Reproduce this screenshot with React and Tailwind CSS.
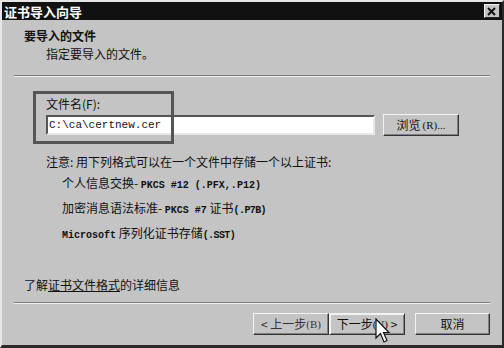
import React from "react";

const F = { fontFamily: '"Noto Sans CJK SC", "Noto Sans", sans-serif' };
const MONO = { fontFamily: '"Liberation Mono", "DejaVu Sans Mono", monospace' };

function Btn({ children, className = "" }) {
  return (
    <div
      className={
        "h-[22px] flex items-center justify-center text-[12px] text-[#111] bg-[#c4c4c4] border border-t-[#f2f2f2] border-l-[#f2f2f2] border-r-[#333] border-b-[#333] shadow-[inset_-1px_-1px_0_#808080] " +
        className
      }
    >
      {children}
    </div>
  );
}

export default function App() {
  return (
    <div className="w-[504px] h-[348px] relative overflow-hidden" style={F}>
      <div className="w-full h-full flex flex-col bg-[#c4c4c4] border-t-2 border-l-2 border-t-[#e6e6e6] border-l-[#e6e6e6] border-r-2 border-r-[#2a2a2a] border-b-[3px] border-b-[#2a2a2a]">
        {/* Title bar */}
        <div className="h-[18px] bg-[#111] flex items-center justify-between pl-[2px] pr-[2px]">
          <span className="text-white font-bold text-[13px] leading-none">证书导入向导</span>
          <div className="w-[16px] h-[14px] bg-[#c4c4c4] border border-t-[#f2f2f2] border-l-[#f2f2f2] border-r-[#222] border-b-[#222] flex items-center justify-center">
            <svg width="10" height="9" viewBox="0 0 10 9">
              <path d="M1 1 L8 8 M8 1 L1 8" stroke="#111" strokeWidth="2" />
            </svg>
          </div>
        </div>

        {/* Header */}
        <div className="pl-[22px] pt-[9px] h-[55px]">
          <div className="text-[12px] font-bold text-[#111] leading-[14px]">要导入的文件</div>
          <div className="text-[12px] text-[#111] leading-[14px] mt-[4px] pl-[22px]">指定要导入的文件。</div>
        </div>
        <div className="mx-[12px] h-[2px] border-t border-t-[#7a7a7a] border-b border-b-[#efefef]" />

        {/* Content */}
        <div className="flex flex-col pl-[44px] pt-[20px]">
          <div className="text-[12px] text-[#111] leading-[14px]">文件名(F):</div>
          <div className="flex items-center mt-[3px] gap-[8px]">
            <div className="w-[329px] h-[20px] bg-white border-2 border-t-[#555] border-l-[#555] border-r-[#e8e8e8] border-b-[#e8e8e8] flex items-center pl-[1px] text-[11px] text-[#111]" style={MONO}>
              C:\ca\certnew.cer
            </div>
            <Btn className="w-[76px] h-[21px]">
              <span>浏览</span>
              <span className="text-[11px] ml-[2px]" style={{ fontFamily: '"Liberation Serif", serif' }}>(R)...</span>
            </Btn>
          </div>
          <div className="text-[12px] text-[#111] leading-[14px] mt-[19px]">注意: 用下列格式可以在一个文件中存储一个以上证书:</div>
          <div className="pl-[16px] flex flex-col gap-[8px] mt-[7px] text-[12px] text-[#111] leading-[14px]">
            <div>个人信息交换- <span className="text-[10px] font-bold" style={MONO}>PKCS #12 (.PFX,.P12)</span></div>
            <div>加密消息语法标准- <span className="text-[10px] font-bold" style={MONO}>PKCS #7</span> 证书<span className="text-[10px] font-bold tracking-[-0.6px]" style={MONO}>(.P7B)</span></div>
            <div><span className="text-[10px] font-bold" style={MONO}>Microsoft</span> 序列化证书存储<span className="text-[10px] font-bold tracking-[-0.6px]" style={MONO}>(.SST)</span></div>
          </div>
        </div>

        <div className="flex-1" />

        {/* Link */}
        <div className="pl-[22px] text-[12px] text-[#111] leading-[14px] mb-[10px]">
          了解<span className="underline">证书文件格式</span>的详细信息
        </div>
        <div className="mx-[12px] h-[2px] border-t border-t-[#7a7a7a] border-b border-b-[#efefef]" />

        {/* Buttons */}
        <div className="flex items-center justify-end pr-[12px] pt-[9px] pb-[10px]">
          <Btn className="w-[76px] text-[#333]">
              &lt; 上一步<span className="text-[11px]" style={{ fontFamily: '"Liberation Serif", serif' }}>(B)</span>
          </Btn>
          <Btn className="w-[76px] border-[#111] border-t-[#111] border-l-[#111] shadow-[inset_1px_1px_0_#f2f2f2,inset_-1px_-1px_0_#808080]">
            下一步<span className="text-[11px]" style={{ fontFamily: '"Liberation Serif", serif' }}>(N)</span>&nbsp;&gt;
          </Btn>
          <Btn className="w-[75px] ml-[10px]">取消</Btn>
        </div>
      </div>

      {/* Highlight annotation */}
      <div className="absolute left-[33px] top-[91px] w-[141px] h-[53px] border-[3px] border-[#555]" />

      {/* Mouse cursor */}
      <svg className="absolute left-[375px] top-[318px]" width="16" height="28" viewBox="0 0 16 28">
        <path d="M1 1 L1 20 L5.5 15.5 L9 24 L12 22.5 L8.5 14.5 L14 14.5 Z" fill="white" stroke="#111" strokeWidth="1.2" />
      </svg>
    </div>
  );
}
